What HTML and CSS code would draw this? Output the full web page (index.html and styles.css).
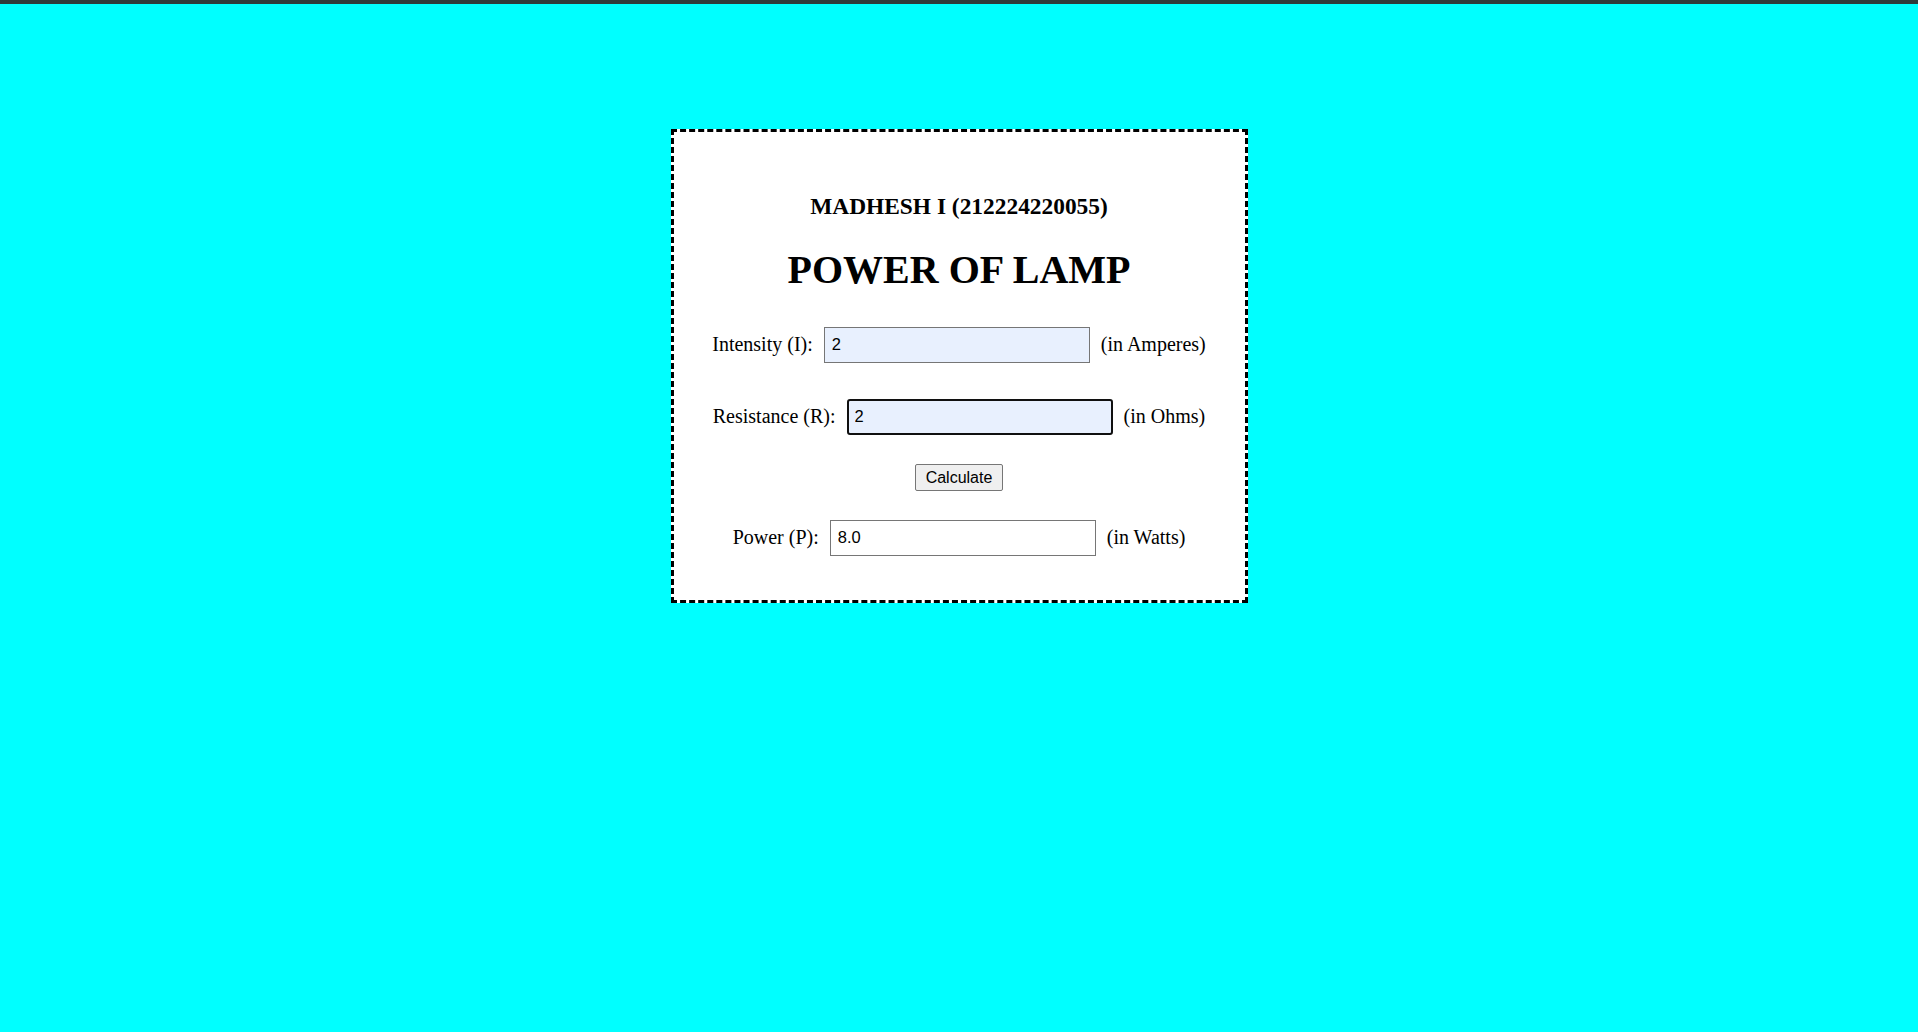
FILE: index.html
```html
<!DOCTYPE html>
<html>
<head>
<meta charset="utf-8">
<title>Power of Lamp</title>
<link rel="stylesheet" href="styles.css">
</head>
<body>
<div class="topbar"></div>
<div class="card">
  <h3 class="author">MADHESH I (212224220055)</h3>
  <h1 class="title">POWER OF LAMP</h1>
  <div class="row row-first">
    <label class="label" for="i">Intensity (I):</label>
    <input class="field filled" id="i" type="text" value="2">
    <span class="unit">(in Amperes)</span>
  </div>
  <div class="row row-second">
    <label class="label" for="r">Resistance (R):</label>
    <input class="field filled focused" id="r" type="text" value="2">
    <span class="unit">(in Ohms)</span>
  </div>
  <div class="btn-row">
    <button class="btn" type="button">Calculate</button>
  </div>
  <div class="row row-result">
    <label class="label" for="p">Power (P):</label>
    <input class="field" id="p" type="text" value="8.0">
    <span class="unit">(in Watts)</span>
  </div>
</div>
</body>
</html>
```

FILE: styles.css
```css
html, body {
  margin: 0;
  padding: 0;
}
body {
  background: #00ffff;
  font-family: "Liberation Serif", "Times New Roman", serif;
  font-size: 20px;
  color: #000;
  min-height: 1032px;
}
.topbar {
  height: 4px;
  background: #2e3b3b;
}
.card {
  box-sizing: border-box;
  width: 577px;
  height: 474px;
  margin: 125px auto 0;
  background: #fff;
  border: 3px dashed #000;
  display: flex;
  flex-direction: column;
  align-items: center;
  padding-top: 61px;
}
.author {
  margin: 0;
  font-size: 23.4px;
  line-height: 27px;
  font-weight: bold;
}
.title {
  margin: 27px 0 0;
  font-size: 40px;
  line-height: 46px;
  font-weight: bold;
}
.row {
  display: flex;
  align-items: center;
  justify-content: center;
  gap: 11px;
  height: 36px;
}
.row-first { margin-top: 34px; }
.row-second { margin-top: 36px; }
.row-result { margin-top: 29px; }
.label, .unit {
  line-height: 23px;
  padding-bottom: 2px;
}
.field {
  box-sizing: border-box;
  width: 266px;
  height: 36px;
  margin: 0;
  padding: 0 7px 2px;
  border: 1px solid #767676;
  border-radius: 0;
  background: #fff;
  font-family: "Liberation Sans", Arial, sans-serif;
  font-size: 16.5px;
  color: #000;
  outline: none;
}
.filled {
  background: #e8f0fe;
}
.focused {
  border: 2px solid #101010;
  border-radius: 3px;
  padding: 0 6px 2px;
}
.btn-row {
  margin-top: 29px;
  display: flex;
  justify-content: center;
}
.btn {
  box-sizing: border-box;
  height: 27px;
  padding: 0 10px;
  margin: 0;
  border: 1px solid #767676;
  border-radius: 2px;
  background: #efefef;
  font-family: "Liberation Sans", Arial, sans-serif;
  font-size: 16px;
  line-height: 18px;
  color: #000;
}
```
